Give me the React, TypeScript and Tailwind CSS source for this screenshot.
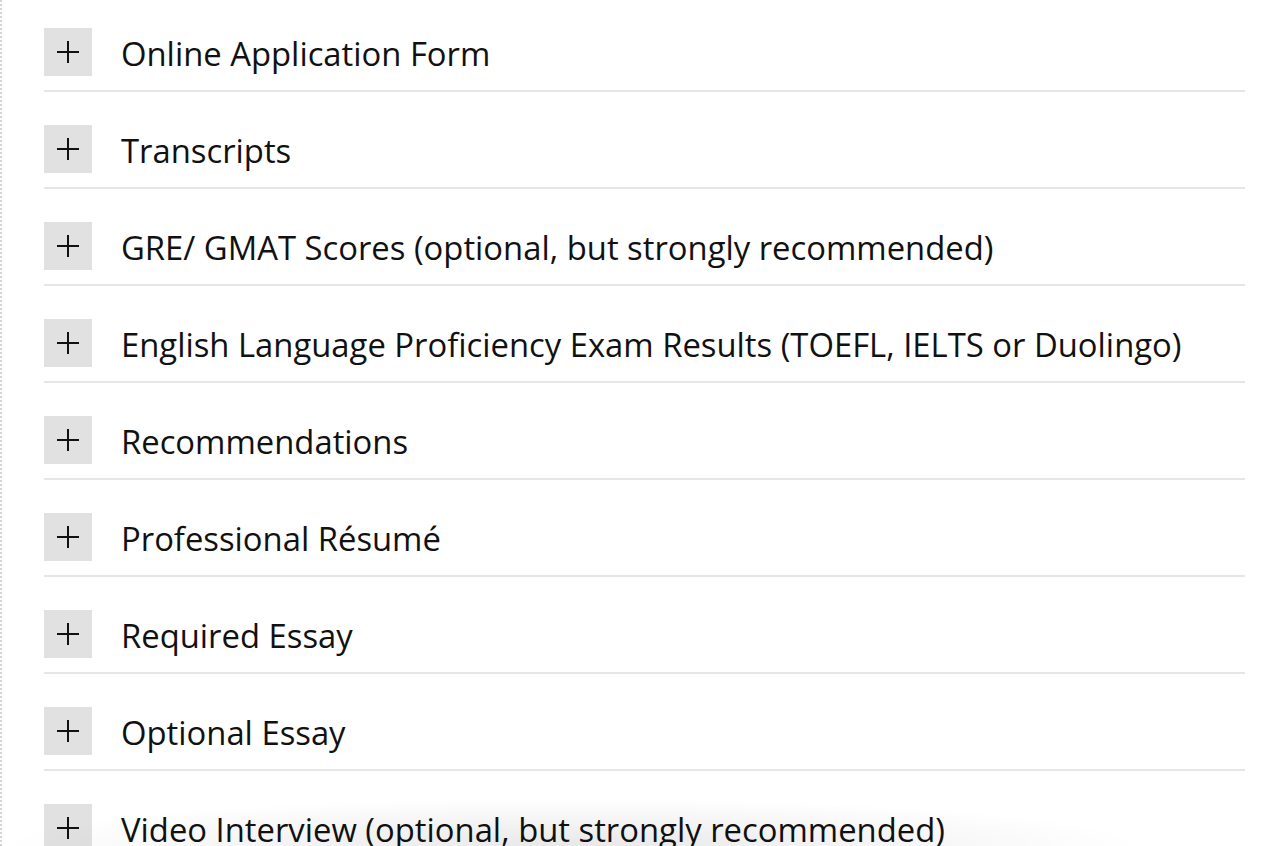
const items = [
    'Online Application Form',
    'Transcripts',
    'GRE/ GMAT Scores (optional, but strongly recommended)',
    'English Language Proficiency Exam Results (TOEFL, IELTS or Duolingo)',
    'Recommendations',
    'Professional Résumé',
    'Required Essay',
    'Optional Essay',
    'Video Interview (optional, but strongly recommended)',
];

const PlusIcon = () => (
    <svg width="24" height="24" viewBox="0 0 24 24" fill="none" stroke="#111" strokeWidth="2">
        <path d="M12 1v22M1 12h22" />
    </svg>
);

const App = () => {
    return (
        <div className="relative h-[846px] w-full overflow-hidden bg-white font-['Open_Sans',sans-serif] text-[#111]">
            {/* dotted edge on the left */}
            <div className="absolute left-0 top-0 h-full w-[3px] border-l-2 border-dotted border-[#d4d4d4]"></div>

            <div className="pl-[44px] pr-[24px] pt-[28px]">
                {items.map((item, i) => (
                    <div
                        key={item}
                        className={`border-b-2 border-[#e6e6e6] pb-[14px] ${i === 0 ? '' : 'pt-[33px]'}`}
                    >
                        <div className="flex h-12 items-center">
                            <div className="flex h-12 w-12 shrink-0 items-center justify-center bg-[#e1e1e1]">
                                <PlusIcon />
                            </div>
                            <span className="ml-[29px] whitespace-nowrap pt-[3px] text-[32.8px] leading-[48px]">
                                {item}
                            </span>
                        </div>
                    </div>
                ))}
            </div>

            {/* soft shadow along the bottom */}
            <div className="pointer-events-none absolute bottom-0 left-0 h-[64px] w-full bg-[radial-gradient(ellipse_60%_100%_at_45%_100%,rgba(0,0,0,0.09),transparent_75%)]"></div>
        </div>
    );
};

export default App;
